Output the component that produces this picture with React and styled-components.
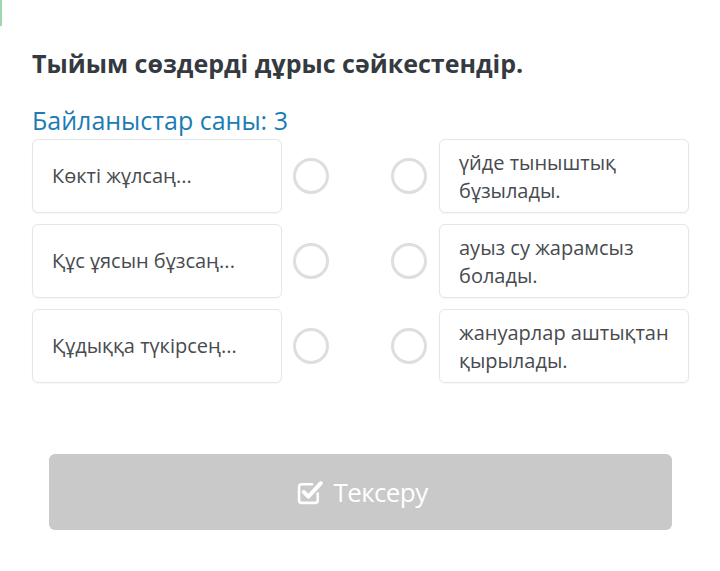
import React from "react";
import styled, { createGlobalStyle } from "styled-components";

const GlobalStyle = createGlobalStyle`
  html, body {
    margin: 0;
    padding: 0;
    background: #ffffff;
    font-family: "Open Sans", "Noto Sans", sans-serif;
  }
`;

const Page = styled.div`
  position: relative;
  width: 720px;
  height: 571px;
  padding: 44px 0 0 32px;
  box-sizing: border-box;
  overflow: hidden;
`;

const Marker = styled.div`
  position: absolute;
  left: 0;
  top: 0;
  width: 2px;
  height: 26px;
  background: #9fd7b0;
`;

const Title = styled.h1`
  margin: 0;
  font-size: 25px;
  line-height: 38px;
  font-weight: 700;
  color: #343a40;
`;

const Count = styled.div`
  margin-top: 21px;
  font-size: 25px;
  line-height: 34px;
  color: #1b7cb5;
`;

const Rows = styled.div`
  display: flex;
  flex-direction: column;
  gap: 11px;
  margin-top: 2px;
`;

const Row = styled.div`
  display: flex;
  align-items: center;
  height: 74px;
`;

const Card = styled.div`
  width: 250px;
  height: 74px;
  box-sizing: border-box;
  border: 1px solid #e4e6e8;
  border-radius: 6px;
  box-shadow: 0 1px 2px rgba(0, 0, 0, 0.04);
  background: #fff;
  color: #474b4f;
  font-size: 20px;
  line-height: 28px;
  display: flex;
  align-items: ${(p) => (p.$top ? "flex-start" : "center")};
  padding: ${(p) => (p.$top ? "9px 10px 0 19px" : "0 10px 0 19px")};
`;

const Dot = styled.div`
  width: 36px;
  height: 36px;
  box-sizing: border-box;
  border: 3px solid #dcdee0;
  border-radius: 50%;
  margin: ${(p) => p.$margin};
`;

const Button = styled.button`
  margin: 71px 0 0 17px;
  width: 623px;
  height: 76px;
  border: none;
  border-radius: 6px;
  background: #c9c9c9;
  color: #fff;
  font-family: "Open Sans", sans-serif;
  font-size: 26px;
  letter-spacing: -0.6px;
  display: flex;
  align-items: center;
  justify-content: center;
  gap: 9px;
  padding: 0 0 0 4px;
`;

const CheckIcon = () => (
  <svg width="27" height="27" viewBox="0 0 26 26" fill="none">
    <path
      d="M20 14V20.5a2.5 2.5 0 0 1-2.5 2.5H4.5A2.5 2.5 0 0 1 2 20.5V7.5A2.5 2.5 0 0 1 4.5 5h10"
      stroke="#fff"
      strokeWidth="2.5"
      strokeLinecap="round"
    />
    <path
      d="M6.5 12.5l4.5 4.5L23 4"
      stroke="#fff"
      strokeWidth="3.8"
      strokeLinecap="round"
      strokeLinejoin="round"
    />
  </svg>
);

const pairs = [
  ["Көкті жұлсаң...", "үйде тыныштық бұзылады."],
  ["Құс ұясын бұзсаң...", "ауыз су жарамсыз болады."],
  ["Құдыққа түкірсең...", "жануарлар аштықтан қырылады."],
];

export default function App() {
  return (
    <>
      <GlobalStyle />
      <Page>
        <Marker />
        <Title>Тыйым сөздерді дұрыс сәйкестендір.</Title>
        <Count>Байланыстар саны: 3</Count>
        <Rows>
          {pairs.map(([left, right], i) => (
            <Row key={i}>
              <Card>{left}</Card>
              <Dot $margin="0 0 0 11px" />
              <Dot $margin="0 12px 0 62px" />
              <Card $top>{right}</Card>
            </Row>
          ))}
        </Rows>
        <Button>
          <CheckIcon />
          Тексеру
        </Button>
      </Page>
    </>
  );
}
